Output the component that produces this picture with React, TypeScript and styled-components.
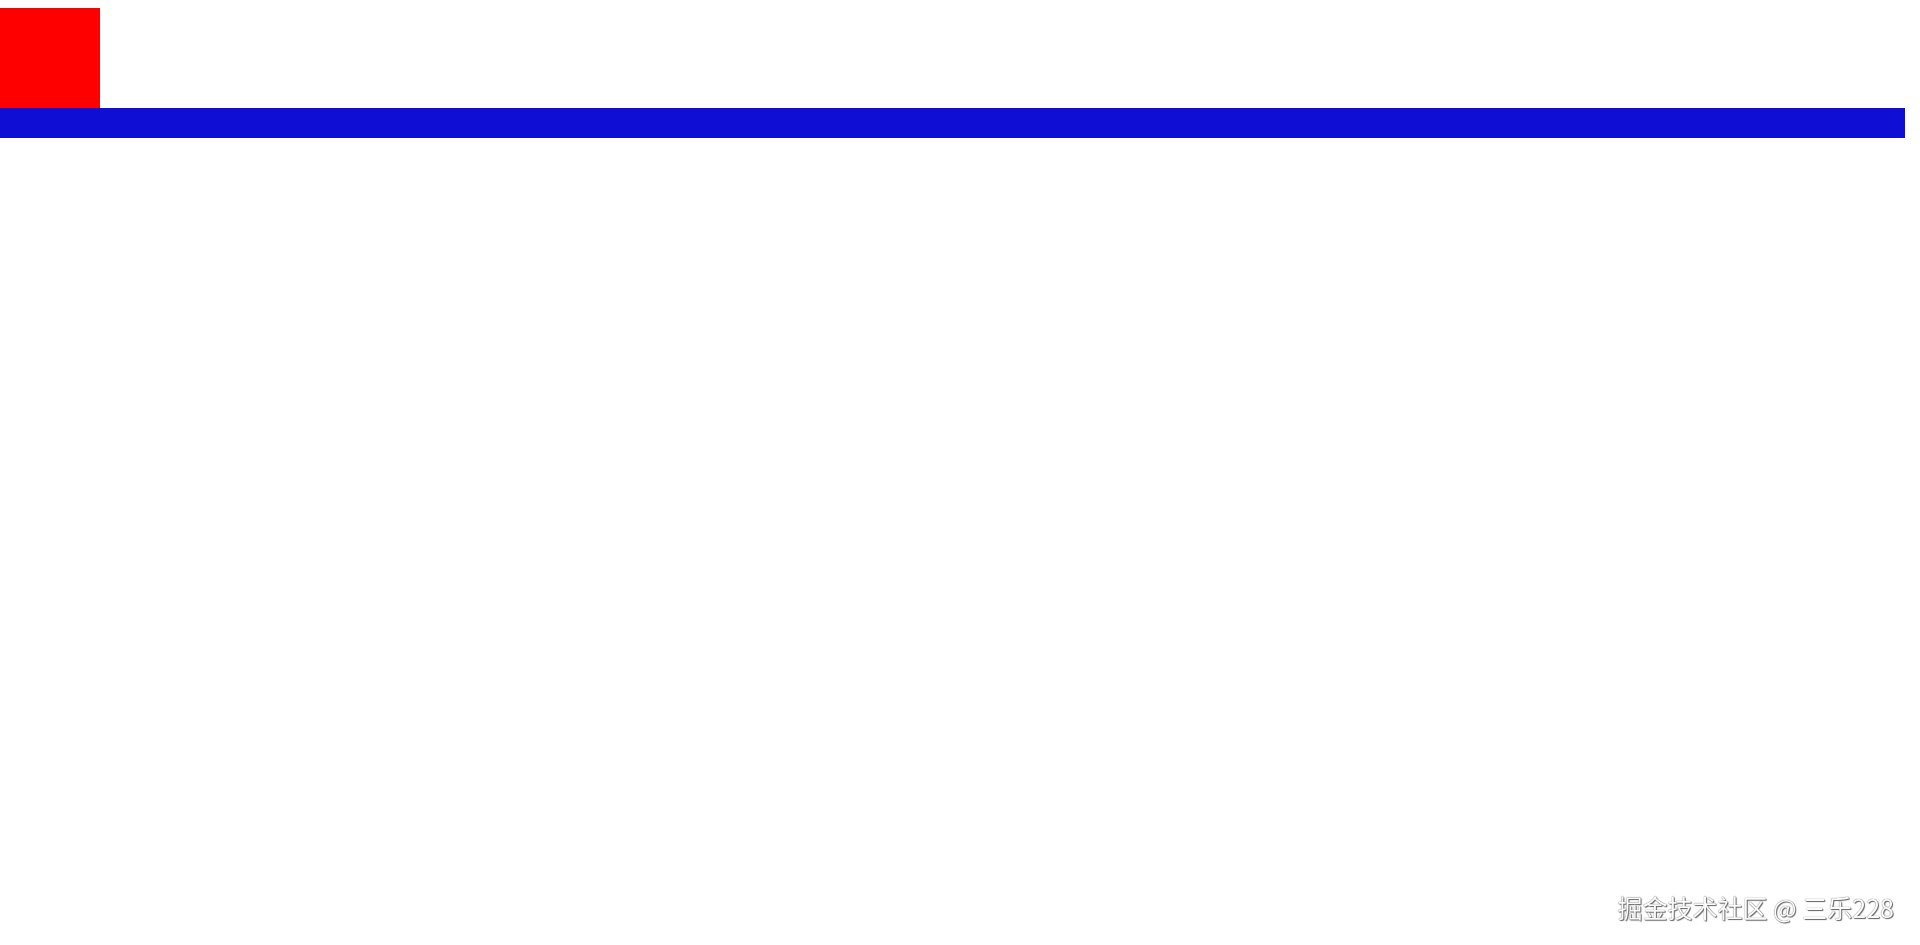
import React from "react";
import styled, { createGlobalStyle } from "styled-components";

const GlobalStyle = createGlobalStyle`
  html, body {
    background: #ffffff;
  }
  body {
    margin: 0;
    padding-top: 8px;
    font-family: "Noto Sans CJK SC", "Noto Sans", sans-serif;
    overflow: hidden;
  }
`;

const Canvas = styled.div`
  width: 1905px;
`;

const RedBox = styled.div`
  width: 100px;
  height: 100px;
  background: #ff0000;
`;

const Bar = styled.div`
  height: 30px;
  background: #0e0ed4;
`;

const Watermark = styled.div`
  position: fixed;
  right: 26px;
  bottom: 23px;
  font-size: 25px;
  line-height: 1.2;
  color: #fbfbfb;
  text-shadow: 0 0 1px #3a3a3a, 1px 1px 1px #6a6a6a;
  pointer-events: none;
  white-space: nowrap;
`;

export default function App() {
  return (
    <>
      <GlobalStyle />
      <Canvas>
        <RedBox />
        <Bar />
      </Canvas>
      <Watermark>掘金技术社区 @ 三乐228</Watermark>
    </>
  );
}
